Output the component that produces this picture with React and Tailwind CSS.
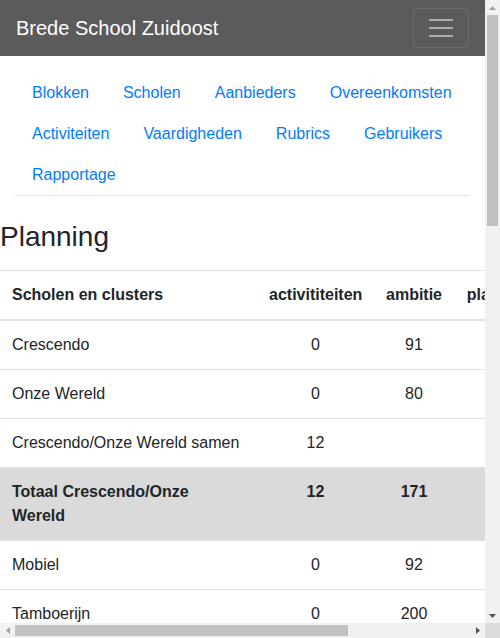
import { useState } from "react";

const links = [
  "Blokken",
  "Scholen",
  "Aanbieders",
  "Overeenkomsten",
  "Activiteiten",
  "Vaardigheden",
  "Rubrics",
  "Gebruikers",
  "Rapportage",
];

// rows of the planning table; total rows are shaded and bold
const rows = [
  { name: "Crescendo", act: 0, amb: 91, plan: 84, real: 78 },
  { name: "Onze Wereld", act: 0, amb: 80, plan: 72, real: 65 },
  { name: "Crescendo/Onze Wereld samen", act: 12, amb: "", plan: 12, real: 10 },
  { name: "Totaal Crescendo/Onze Wereld", act: 12, amb: 171, plan: 168, real: 153, total: true },
  { name: "Mobiel", act: 0, amb: 92, plan: 88, real: 80 },
  { name: "Tamboerijn", act: 0, amb: 200, plan: 190, real: 174 },
  { name: "De Kameleon", act: 3, amb: 120, plan: 112, real: 101 },
  { name: "Het Gein", act: 0, amb: 110, plan: 98, real: 90 },
  { name: "Kameleon/Het Gein samen", act: 8, amb: "", plan: 8, real: 6 },
  { name: "Totaal Kameleon/Het Gein", act: 11, amb: 230, plan: 218, real: 197, total: true },
  { name: "De Polsstok", act: 2, amb: 140, plan: 132, real: 120 },
  { name: "Nelson Mandela", act: 0, amb: 95, plan: 90, real: 82 },
  { name: "Polsstok/Mandela samen", act: 6, amb: "", plan: 6, real: 5 },
  { name: "Totaal Polsstok/Mandela", act: 8, amb: 235, plan: 228, real: 207, total: true },
  { name: "De Achtsprong", act: 0, amb: 130, plan: 122, real: 115 },
  { name: "Venserpolder", act: 1, amb: 105, plan: 99, real: 91 },
  { name: "Achtsprong/Venserpolder samen", act: 9, amb: "", plan: 9, real: 7 },
  { name: "Totaal Achtsprong/Venserpolder", act: 10, amb: 235, plan: 230, real: 213, total: true },
  { name: "Bijlmerhorst", act: 0, amb: 60, plan: 58, real: 51 },
  { name: "Zonnehoek", act: 0, amb: 72, plan: 66, real: 60 },
];

const Arrow = ({ dir, dark }) => {
  const pts = {
    up: "0,4 3.5,0 7,4",
    down: "0,0 7,0 3.5,4",
    left: "4,0 4,7 0,3.5",
    right: "0,0 0,7 4,3.5",
  }[dir];
  const vertical = dir === "up" || dir === "down";

  return (
    <svg width={vertical ? 7 : 4} height={vertical ? 4 : 7} viewBox={vertical ? "0 0 7 4" : "0 0 4 7"}>
      <polygon points={pts} fill={dark ? "#505050" : "#a3a3a3"} />
    </svg>
  );
};

export default function App() {
  const [active, setActive] = useState(null);

  return (
    <div className="w-[500px] h-[638px] flex flex-col overflow-hidden font-['Liberation_Sans',Arial,sans-serif] text-base leading-normal text-[#212529] bg-white">
      <div className="flex h-[623px]">
        {/* Page viewport */}
        <div className="w-[485px] h-[623px] overflow-hidden">
          {/* Top bar */}
          <nav className="h-14 bg-[#5b5b5b] flex items-center justify-between px-4">
            <span className="text-xl text-white leading-normal">Brede School Zuidoost</span>
            <button className="w-14 h-10 rounded border border-white/10 flex flex-col items-center justify-center gap-[6px]">
              <span className="block w-6 h-[2px] bg-white/50" />
              <span className="block w-6 h-[2px] bg-white/50" />
              <span className="block w-6 h-[2px] bg-white/50" />
            </button>
          </nav>

          {/* Menu links */}
          <div className="px-[15px] pt-4">
            <ul className="flex flex-wrap border-b border-[#dee2e6]">
              {links.map((l) => (
                <li key={l}>
                  <a
                    href="#"
                    onClick={(e) => { e.preventDefault(); setActive(l); }}
                    className={`h-[41px] px-[17px] flex items-center text-[#007bff] ${active === l ? "underline" : ""}`}
                  >
                    {l}
                  </a>
                </li>
              ))}
            </ul>
          </div>

          <h3 className="mt-6 mb-4 text-[28px] leading-[1.2] font-normal">Planning</h3>

          {/* Planning table */}
          <table className="table-fixed w-[663px] border-collapse mb-4">
            <colgroup>
              <col className="w-[257px]" />
              <col className="w-[117px]" />
              <col className="w-[80px]" />
              <col className="w-[92px]" />
              <col className="w-[117px]" />
            </colgroup>
            <thead>
              <tr className="border-t border-b-2 border-[#dee2e6]">
                <th className="p-3 text-left align-bottom font-bold">Scholen en clusters</th>
                <th className="p-3 text-center align-bottom font-bold">activititeiten</th>
                <th className="p-3 text-center align-bottom font-bold">ambitie</th>
                <th className="p-3 text-center align-bottom font-bold">planning</th>
                <th className="p-3 text-center align-bottom font-bold">gerealiseerd</th>
              </tr>
            </thead>
            <tbody>
              {rows.map((r) => (
                <tr key={r.name} className={`border-t border-[#dee2e6] ${r.total ? "bg-[#dadada] font-bold" : ""}`}>
                  <td className="p-3 align-top">{r.name}</td>
                  <td className="p-3 align-top text-center">{r.act}</td>
                  <td className="p-3 align-top text-center">{r.amb}</td>
                  <td className="p-3 align-top text-center">{r.plan}</td>
                  <td className="p-3 align-top text-center">{r.real}</td>
                </tr>
              ))}
            </tbody>
          </table>
        </div>

        {/* Vertical scrollbar */}
        <div className="w-[15px] h-[623px] bg-[#f1f1f1] flex flex-col items-center">
          <div className="h-[15px] flex items-center justify-center"><Arrow dir="up" /></div>
          <div className="flex-1 w-full px-[2px]">
            <div className="h-[211px] bg-[#c1c1c1]" />
          </div>
          <div className="h-[15px] flex items-center justify-center"><Arrow dir="down" dark /></div>
        </div>
      </div>

      {/* Horizontal scrollbar */}
      <div className="flex h-[15px]">
        <div className="w-[485px] h-[15px] bg-[#f1f1f1] flex items-center">
          <div className="w-[15px] flex justify-center"><Arrow dir="left" /></div>
          <div className="flex-1 h-full py-[2px]">
            <div className="w-[333px] h-full bg-[#c1c1c1]" />
          </div>
          <div className="w-[15px] flex justify-center"><Arrow dir="right" dark /></div>
        </div>
        <div className="w-[15px] h-[15px] bg-[#dcdcdc]" />
      </div>
    </div>
  );
}
